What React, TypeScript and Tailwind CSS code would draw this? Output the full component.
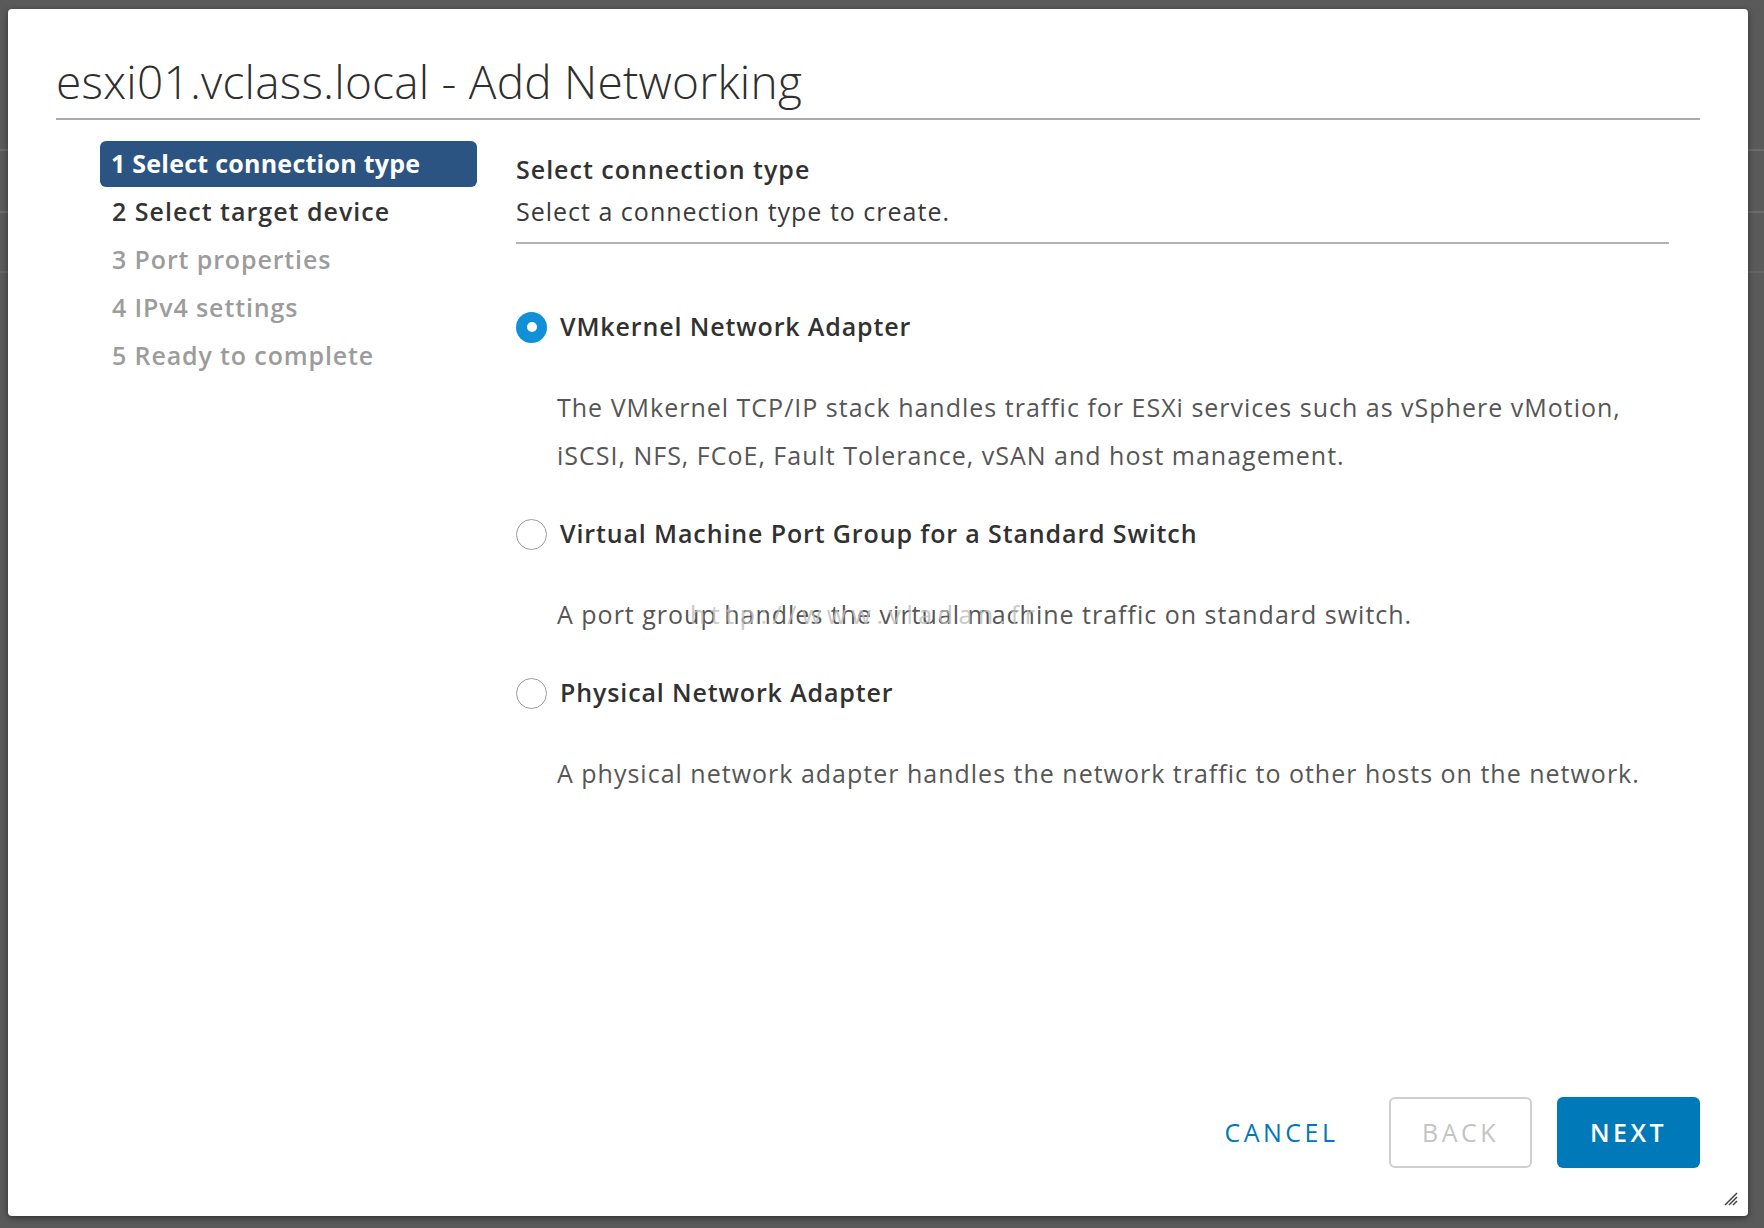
import type { ReactNode } from 'react'

const STEPS = [
  { label: '1 Select connection type', state: 'active' },
  { label: '2 Select target device', state: 'enabled' },
  { label: '3 Port properties', state: 'disabled' },
  { label: '4 IPv4 settings', state: 'disabled' },
  { label: '5 Ready to complete', state: 'disabled' },
] as const

const OPTIONS = [
  {
    title: 'VMkernel Network Adapter',
    lines: [
      'The VMkernel TCP/IP stack handles traffic for ESXi services such as vSphere vMotion,',
      'iSCSI, NFS, FCoE, Fault Tolerance, vSAN and host management.',
    ],
    checked: true,
  },
  {
    title: 'Virtual Machine Port Group for a Standard Switch',
    lines: ['A port group handles the virtual machine traffic on standard switch.'],
    checked: false,
  },
  {
    title: 'Physical Network Adapter',
    lines: [
      'A physical network adapter handles the network traffic to other hosts on the network.',
    ],
    checked: false,
  },
]

function Radio({ checked }: { checked: boolean }) {
  return checked ? (
    <span className="flex h-[31px] w-[31px] shrink-0 items-center justify-center rounded-full bg-[#1190d8]">
      <span className="h-[10px] w-[10px] rounded-full bg-white" />
    </span>
  ) : (
    <span className="h-[31px] w-[31px] shrink-0 rounded-full border border-[#9c9c9c] bg-white" />
  )
}

function Option({
  title,
  lines,
  checked,
  first,
  children,
}: {
  title: string
  lines: string[]
  checked: boolean
  first: boolean
  children?: ReactNode
}) {
  return (
    <div className={first ? 'mt-[63px]' : 'mt-[35px]'}>
      <label className="flex h-[40px] items-center gap-[13px]">
        <Radio checked={checked} />
        <span className="text-[25px] font-semibold tracking-[0.035em] text-[#313131]">
          {title}
        </span>
      </label>
      <div className="relative mt-[36px] pl-[41px] text-[25px] leading-[48px] tracking-[0.04em] text-[#565656]">
        {lines.map((line) => (
          <div key={line}>{line}</div>
        ))}
        {children}
      </div>
    </div>
  )
}

export default function App() {
  return (
    <div className="relative h-[1228px] w-[1764px] overflow-hidden bg-[#5a5a5a] font-['Open_Sans','Liberation_Sans',sans-serif]">
      {/* dimmed page underneath the modal */}
      <div className="flex flex-col pt-[149px]">
        <div className="h-[62px] border-t-2 border-[#6c6c6c]" />
        <div className="h-[60px] border-t-2 border-[#6c6c6c]" />
        <div className="h-[60px] border-t-2 border-[#666]" />
      </div>

      <div className="absolute left-[8px] top-[9px] flex h-[1207px] w-[1740px] flex-col rounded-[4px] bg-white px-[48px] pt-[47px] pb-[48px] shadow-[0_2px_6px_rgba(0,0,0,0.45)]">
        <h1 className="text-[46px] font-light leading-[50px] tracking-[0.005em] text-[#2f2f2f]">
          esxi01.vclass.local - Add Networking
        </h1>
        <div className="mt-[12px] h-[2px] bg-[#ababab]" />

        <div className="mt-[21px] flex">
          <nav className="ml-[44px] flex w-[377px] shrink-0 flex-col gap-[2px]">
            {STEPS.map((step) => (
              <div
                key={step.label}
                className={
                  step.state === 'active'
                    ? 'flex h-[46px] items-center rounded-[6px] bg-[#2c5482] pl-[11px] text-[25px] font-bold tracking-[0.01em] text-white'
                    : step.state === 'enabled'
                      ? 'flex h-[46px] items-center pl-[12px] text-[25px] font-semibold tracking-[0.04em] text-[#333]'
                      : 'flex h-[46px] items-center pl-[12px] text-[25px] font-semibold tracking-[0.035em] text-[#9c9c9c]'
                }
              >
                {step.label}
              </div>
            ))}
          </nav>

          <section className="ml-[39px] w-[1153px] pt-[12px]">
            <h2 className="text-[25px] font-semibold leading-[32px] tracking-[0.04em] text-[#313131]">
              Select connection type
            </h2>
            <p className="mt-[10px] text-[25px] leading-[32px] tracking-[0.04em] text-[#3a3a3a]">
              Select a connection type to create.
            </p>
            <div className="mt-[15px] h-[2px] bg-[#b3b3b3]" />

            {OPTIONS.map((opt, i) => (
              <Option key={opt.title} first={i === 0} {...opt}>
                {i === 1 && (
                  <span className="pointer-events-none absolute left-[174px] top-0 tracking-[0.22em] text-[#bdbdbd] opacity-80">
                    http://www.vladan.fr
                  </span>
                )}
              </Option>
            ))}
          </section>
        </div>

        <div className="mt-auto flex justify-end">
          <button
            type="button"
            className="h-[71px] w-[143px] text-[25px] font-medium tracking-[0.14em] text-[#0079b8]"
          >
            CANCEL
          </button>
          <button
            type="button"
            disabled
            className="ml-[36px] h-[71px] w-[143px] rounded-[6px] border-2 border-[#cfcfcf] text-[25px] font-medium tracking-[0.14em] text-[#c4c4c4]"
          >
            BACK
          </button>
          <button
            type="button"
            className="ml-[25px] h-[71px] w-[143px] rounded-[6px] bg-[#0079b8] text-[25px] font-semibold tracking-[0.14em] text-white"
          >
            NEXT
          </button>
        </div>

        <svg
          className="absolute bottom-[10px] right-[10px]"
          width="15"
          height="15"
          viewBox="0 0 15 15"
        >
          <path d="M14 2 L2 14 M14 6 L6 14 M14 10 L10 14" stroke="#444" strokeWidth="1.5" />
        </svg>
      </div>
    </div>
  )
}
